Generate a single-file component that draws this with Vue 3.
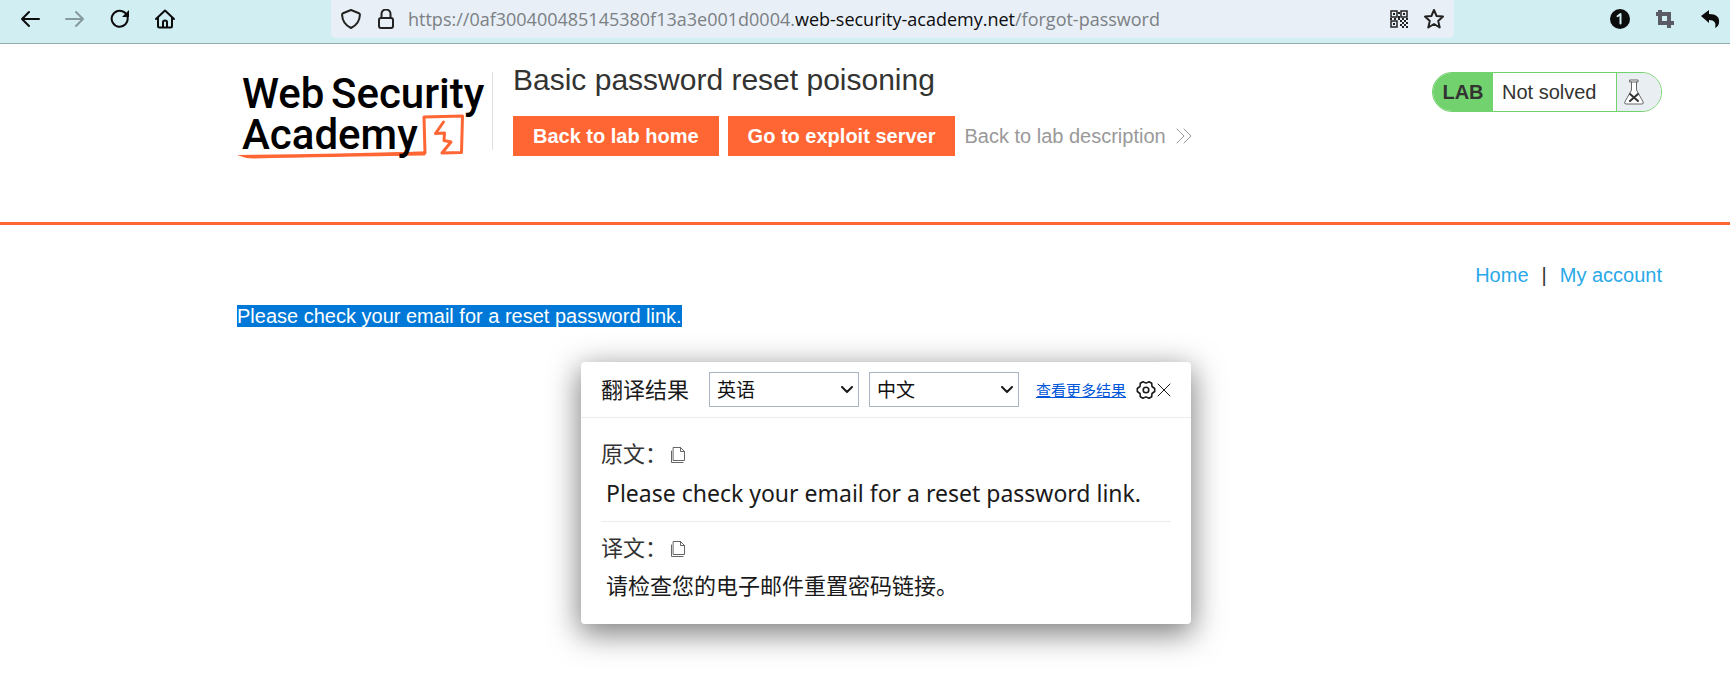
<script setup>
import { ref } from 'vue'

const source = ref('英语')
const target = ref('中文')
const url = {
  start: 'https://0af300400485145380f13a3e001d0004.',
  domain: 'web-security-academy.net',
  path: '/forgot-password',
}

const finder = (x, y) => `M${x} ${y}h6v6h-6z`
const finders = [[2, 2], [12, 2], [2, 12]]
const dots = [
  [9, 3], [9, 7], [1, 9], [5, 9], [9, 9], [13, 9], [17, 9],
  [11, 11], [15, 11], [13, 13], [17, 13], [11, 15], [15, 15], [13, 17], [17, 17],
]
</script>

<template>
  <div class="page">
    <div class="toolbar">
      <div class="nav">
        <button type="button" aria-label="Back">
          <svg width="20" height="20" viewBox="0 0 20 20"><path d="M19 10H2M9 3L2 10l7 7" /></svg>
        </button>
        <button type="button" aria-label="Forward" class="dim">
          <svg width="20" height="20" viewBox="0 0 20 20"><path d="M1 10h17M11 3l7 7-7 7" /></svg>
        </button>
        <button type="button" aria-label="Reload">
          <svg width="20" height="20" viewBox="0 0 20 20">
            <path d="M17.6 8.500a8 8 0 1 1-3-5.100L16 5" /><path class="solid" d="M19 1v7h-7z" />
          </svg>
        </button>
        <button type="button" aria-label="Home">
          <svg width="20" height="20" viewBox="0 0 20 20">
            <path d="M1 10l9-8.500 9 8.500M3 8.500V17q0 1.500 1.500 1.500h11Q17 18.500 17 17V8.500M8 18v-5q0-1.500 2-1.500t2 1.500v5" />
          </svg>
        </button>
      </div>
      <div class="address">
        <div class="marks">
          <svg width="20" height="20" viewBox="0 0 20 20">
            <path d="M10 1l8 3.200q1 .4.900 1.800-.4 9-8.900 13Q1.500 15 1.100 6 1 4.600 2 4.200z" />
          </svg>
          <svg width="20" height="20" viewBox="0 0 20 20">
            <rect x="3" y="9" width="14" height="10" rx="2" /><path d="M5.500 9V5a4.500 4.500 0 0 1 9 0v4" />
          </svg>
        </div>
        <span class="url">{{ url.start }}<b>{{ url.domain }}</b>{{ url.path }}</span>
        <div class="marks">
          <button type="button" aria-label="Show QR code">
            <svg width="20" height="20" viewBox="0 0 20 20">
              <g v-for="(f, i) in finders" :key="i">
                <path class="finder" :d="finder(f[0], f[1])" />
                <rect class="solid" :x="f[0] + 2" :y="f[1] + 2" width="2" height="2" />
              </g>
              <rect v-for="(d, i) in dots" :key="i" class="solid" :x="d[0]" :y="d[1]" width="2" height="2" />
            </svg>
          </button>
          <button type="button" aria-label="Bookmark this page">
            <svg width="20" height="20" viewBox="0 0 20 20">
              <path d="M10 1l2.600 6 6.400.6-4.800 4.300L15.700 18.500 10 15l-5.700 3.500 1.500-6.600L1 7.600 7.400 7z" />
            </svg>
          </button>
        </div>
      </div>
      <div class="tools">
        <button type="button" aria-label="One item">
          <svg width="20" height="20" viewBox="0 0 20 20">
            <circle class="solid" cx="10" cy="10" r="10" /><path class="light" d="M7.500 7.200L10.500 5v9.500" />
          </svg>
        </button>
        <button type="button" aria-label="Crop">
          <svg width="20" height="20" viewBox="0 0 20 20"><path class="crop" d="M5 1v13h14M1 5h13v14" /></svg>
        </button>
        <button type="button" aria-label="Undo">
          <svg width="20" height="20" viewBox="0 0 20 20">
            <path class="solid" d="M1 7l8-6v4c7 0 11 3 10 9-.4 2-1.500 4-4 5 1.500-5-.5-8-6-8v3z" />
          </svg>
        </button>
      </div>
    </div>

    <header class="lab">
      <svg class="logo" width="255" height="90" viewBox="0 0 255 90" role="img" aria-label="Web Security Academy">
        <path class="stroke" d="M198.500 61.500L206.500 50M198.500 61.500l9-.5-.5 7.500 7 1.500-9 11 19.500-.5L225.500 44l-38.500 1 1 36-40 1.500" />
        <path class="flare" d="M0 83Q90 82 188 79.500v4Q90 85 16 86.500q-8 0-16-3.500z" />
        <text x="5" y="36">Web</text>
        <text x="94" y="36">Security</text>
        <text x="5" y="77">Academy</text>
      </svg>
      <div class="rule"></div>
      <div class="intro">
        <h1>Basic password reset poisoning</h1>
        <div class="actions">
          <a href="#home" class="btn">Back to lab home</a>
          <a href="#exploit" class="btn">Go to exploit server</a>
          <a href="#description" class="desc">Back to lab description
            <svg width="16" height="16" viewBox="0 0 16 16"><path d="M1 1l7 7-7 7M8 1l7 7-7 7" /></svg>
          </a>
        </div>
      </div>
      <div class="status">
        <strong>LAB</strong>
        <span class="state">Not solved</span>
        <span class="flask">
          <svg width="20" height="26" viewBox="0 0 20 26">
            <path class="glass" d="M6 1h8v2h-8zM7.500 3v8L.8 23q-.5 2 1.200 2h16q1.700 0 1.200-2L12.500 11V3" />
            <path class="cross" d="M6 15l8 7M14 15l-8 7" />
          </svg>
        </span>
      </div>
    </header>

    <main>
      <nav class="links">
        <a href="#home">Home</a><span>|</span><a href="#account">My account</a>
      </nav>
      <p class="notice"><span>Please check your email for a reset password link.</span></p>
    </main>

    <section class="popup" aria-label="翻译结果">
      <div class="head">
        <h2>翻译结果</h2>
        <div class="pick">
          <select v-model="source" aria-label="原文语言"><option>英语</option><option>中文</option></select>
          <svg width="12" height="8" viewBox="0 0 12 8"><path d="M1 1l5 5 5-5" /></svg>
        </div>
        <div class="pick">
          <select v-model="target" aria-label="译文语言"><option>中文</option><option>英语</option></select>
          <svg width="12" height="8" viewBox="0 0 12 8"><path d="M1 1l5 5 5-5" /></svg>
        </div>
        <a href="#more">查看更多结果</a>
        <div class="controls">
          <button type="button" aria-label="设置">
            <svg class="gear" width="20" height="20" viewBox="0 0 20 20">
              <path d="M18.700 8.500v3L16 13.500l-.3 3.200-2.700 1.600-3-1.400-3 1.400-2.700-1.600L4 13.500l-2.700-2v-3L4 6.500l.3-3.200L7 1.700l3 1.400 3-1.400 2.700 1.600.3 3.200z" />
              <circle cx="10" cy="10" r="2.800" />
            </svg>
          </button>
          <button type="button" aria-label="关闭">
            <svg width="14" height="14" viewBox="0 0 14 14"><path class="thin" d="M1 1l12 12M13 1L1 13" /></svg>
          </button>
        </div>
      </div>
      <div class="body">
        <div class="block">
          <h3>原文：
            <button type="button" aria-label="复制原文">
              <svg width="16" height="18" viewBox="0 0 16 18">
                <path class="copy" d="M3.500 1.500h7l4 4v9h-11zM10.500 1.500v4h4M1.500 5v11.500H13" />
              </svg>
            </button>
          </h3>
          <p class="en">Please check your email for a reset password link.</p>
        </div>
        <div class="block">
          <h3>译文：
            <button type="button" aria-label="复制译文">
              <svg width="16" height="18" viewBox="0 0 16 18">
                <path class="copy" d="M3.500 1.500h7l4 4v9h-11zM10.500 1.500v4h4M1.500 5v11.500H13" />
              </svg>
            </button>
          </h3>
          <p>请检查您的电子邮件重置密码链接。</p>
        </div>
      </div>
    </section>
  </div>
</template>

<style>
body {
  background: #fff;
}
</style>

<style scoped>
.page {
  position: relative;
  min-height: 100vh;
  font: 20px/24px "Liberation Sans", "Noto Sans CJK SC", sans-serif;
  color: #333332;
}
h1, h2, h3, p {
  margin: 0;
  font-weight: 400;
}
a {
  text-decoration: none;
}
button {
  display: flex;
  padding: 0;
  border: 0;
  background: none;
  color: inherit;
}
svg {
  display: block;
  flex: none;
  fill: none;
  stroke: currentColor;
  stroke-width: 2;
  stroke-linejoin: round;
  stroke-linecap: round;
}
.solid {
  fill: currentColor;
  stroke: none;
}
.thin {
  stroke-width: 1;
}

.toolbar {
  display: flex;
  height: 43px;
  border-bottom: 1px solid #93abae;
  background: #d1eef2;
  color: #0c0c0d;
}
.nav {
  display: flex;
  box-sizing: border-box;
  width: 331px;
  height: 37px;
  padding-left: 20px;
  gap: 25px;
  align-items: center;
}
.dim {
  color: #869a9d;
}
.address {
  display: flex;
  flex: 1;
  box-sizing: border-box;
  height: 38px;
  padding: 0 10px 1px;
  gap: 12px;
  align-items: center;
  border-radius: 0 0 5px 5px;
  background: #e8eff6;
  color: #222;
}
.marks {
  display: flex;
  gap: 15px;
}
.url {
  flex: 1;
  font: 18px/24px "Open Sans", sans-serif;
  color: #7b8084;
  white-space: nowrap;
}
.url b {
  font-weight: 400;
  color: #0c0c0d;
}
.finder {
  stroke-width: 1.500;
  stroke-linejoin: miter;
}
.tools {
  display: flex;
  box-sizing: border-box;
  width: 276px;
  height: 37px;
  padding-right: 10px;
  gap: 25px;
  align-items: center;
  justify-content: flex-end;
}
.light {
  stroke: #d1eef2;
}
.crop {
  stroke: #5b5b66;
  stroke-width: 4;
  stroke-linecap: butt;
  stroke-linejoin: miter;
}

.lab {
  display: flex;
  box-sizing: border-box;
  height: 181px;
  padding: 28px 68px 0 237px;
  border-bottom: 3px solid #ff6633;
  align-items: flex-start;
}
.logo {
  overflow: visible;
}
.logo text {
  font: 500 42px "Roboto", sans-serif;
  fill: #000;
  stroke: none;
}
.stroke {
  stroke: #ff6633;
  stroke-width: 3;
}
.flare {
  fill: #ff6633;
  stroke: none;
}
.rule {
  width: 1px;
  height: 78px;
  background: #e0e0e0;
}
.intro {
  flex: 1;
  padding-left: 20px;
}
h1 {
  margin-top: -10px;
  font-size: 30px;
  line-height: 36px;
}
.actions {
  display: flex;
  margin-top: 18px;
  gap: 9px;
}
.btn, .desc {
  line-height: 40px;
  white-space: nowrap;
}
.btn {
  padding: 0 20px;
  background: #ff6633;
  color: #fff;
  font-weight: 700;
}
.desc {
  display: flex;
  gap: 10px;
  align-items: center;
  color: #999;
}
.desc svg {
  stroke-width: 1;
}
.status {
  display: flex;
  box-sizing: border-box;
  width: 230px;
  height: 40px;
  border: 1px solid #72d26e;
  border-radius: 20px;
  overflow: hidden;
  line-height: 38px;
}
.status strong {
  width: 60px;
  background: #72d26e;
  text-align: center;
}
.state {
  flex: 1;
  padding-left: 9px;
}
.flask {
  display: flex;
  width: 37px;
  padding-left: 7px;
  align-items: center;
  border-left: 1px solid #72d26e;
  background: #e9eef3;
}
.glass {
  fill: #fff;
  stroke: #666;
  stroke-width: 1;
}
.cross {
  stroke: #333;
  stroke-width: 2;
}

main {
  padding: 38px 68px 0 237px;
}
.links {
  display: flex;
  justify-content: flex-end;
  gap: 13px;
}
.links a {
  color: #29a9e8;
}
.notice {
  margin-top: 17px;
}
.notice span {
  background: #0078d7;
  color: #fff;
}

.popup {
  position: absolute;
  top: 362px;
  left: 581px;
  width: 610px;
  border-radius: 4px;
  background: #fff;
  box-shadow: 0 8px 30px 2px rgba(0, 0, 0, 0.5);
  color: #1a1a1a;
}
.head {
  display: flex;
  height: 55px;
  padding: 0 16px 0 20px;
  gap: 10px;
  align-items: center;
  border-bottom: 1px solid #ececec;
}
h2, h3, .popup p {
  font-size: 22px;
  line-height: 34px;
}
.head h2 {
  width: 98px;
  padding-top: 2px;
}
.pick {
  position: relative;
  flex: none;
  width: 150px;
}
.pick select {
  display: block;
  width: 100%;
  height: 35px;
  padding: 0 7px 2px;
  border: 1px solid #aab4c3;
  border-radius: 0;
  appearance: none;
  background: #fff;
  color: #111;
  font: 19px "Noto Sans CJK SC", sans-serif;
}
.pick svg {
  position: absolute;
  top: 14px;
  right: 6px;
  pointer-events: none;
}
.head a {
  margin-left: 7px;
  padding-top: 3px;
  font-size: 15px;
  color: #0057d9;
  text-decoration: underline;
  white-space: nowrap;
}
.controls {
  display: flex;
  gap: 1px;
  align-items: center;
}
.controls .gear {
  stroke-width: 1.6;
}
.body {
  padding: 20px;
}
.block + .block {
  margin-top: 11px;
  padding-top: 10px;
  border-top: 1px solid #ececec;
}
.block h3 {
  display: flex;
  gap: 3px;
  align-items: center;
  color: #333;
}
.block p {
  margin-top: 4px;
  padding-left: 5px;
}
.popup .en {
  font-family: "Noto Sans", sans-serif;
  font-size: 23px;
}
.copy {
  stroke: #666;
  stroke-width: 1;
}
</style>
